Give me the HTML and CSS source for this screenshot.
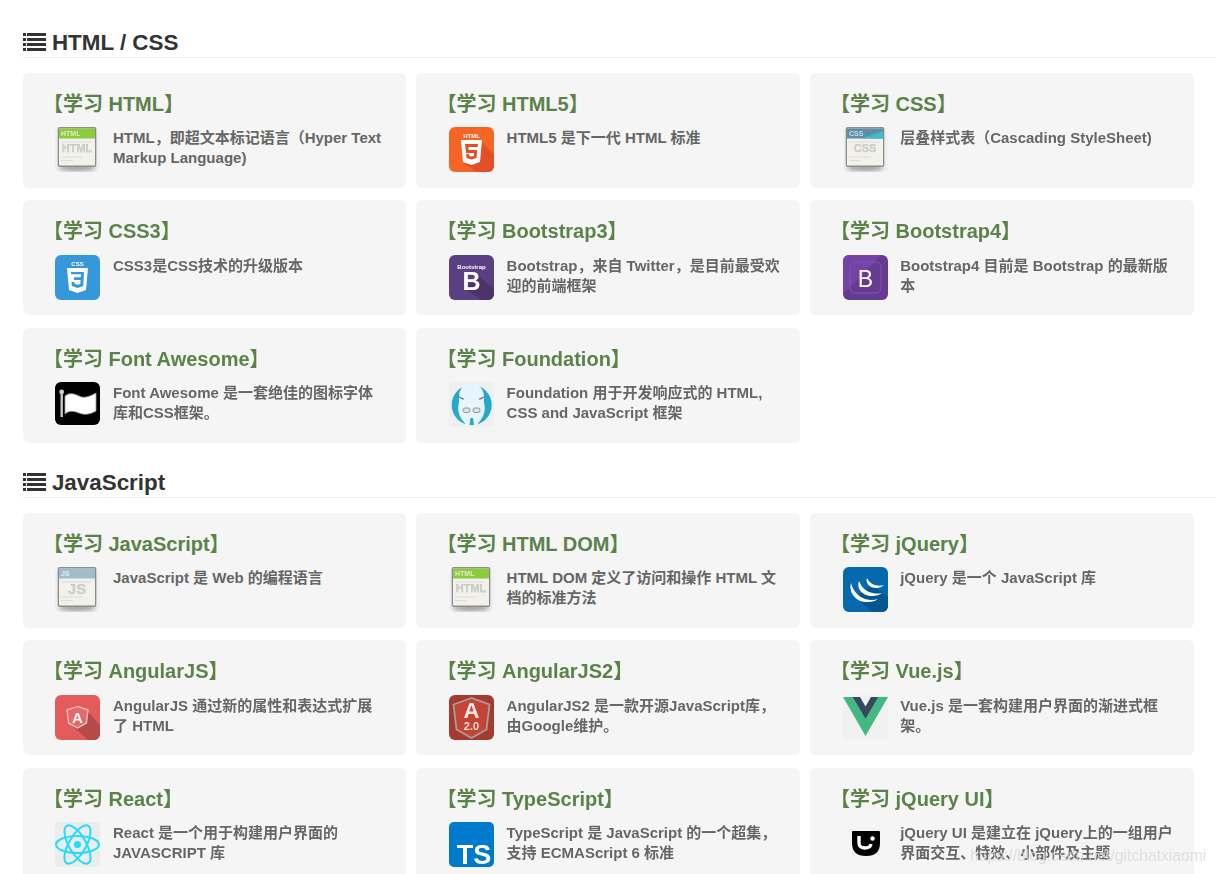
FILE: index.html
```html
<!DOCTYPE html>
<html lang="zh-CN">
<head>
<meta charset="utf-8">
<title>教程</title>
<link rel="stylesheet" href="styles.css">
</head>
<body>
<svg class="defs" width="0" height="0" aria-hidden="true">
  <defs>
    <filter id="blur3" x="-30%" y="-30%" width="160%" height="160%"><feGaussianBlur stdDeviation="2"/></filter>
    <filter id="blur1" x="-30%" y="-30%" width="160%" height="160%"><feGaussianBlur stdDeviation="0.5"/></filter>
    <filter id="soft" x="-10%" y="-10%" width="120%" height="120%"><feGaussianBlur stdDeviation="0.3"/></filter>
    <symbol id="list" viewBox="0 0 23 18">
      <path fill="#333" d="M0 0h3v3H0zM4 0h19v3H4zM0 5h3v3H0zM4 5h19v3H4zM0 10h3v3H0zM4 10h19v3H4zM0 15h3v3H0zM4 15h19v3H4z"/>
    </symbol>
    <symbol id="sheet" viewBox="0 0 45 45">
      <rect x="0.500" y="2" width="43" height="42" rx="4" fill="#e2e2e2" filter="url(#blur3)" opacity=".55"/>
      <ellipse cx="22" cy="41" rx="18" ry="2.400" fill="#777" filter="url(#blur3)" opacity=".8"/>
      <rect x="2.700" y="0" width="38.600" height="40" rx="2" fill="#8d8d88"/>
      <rect x="4" y="1.500" width="36" height="37" fill="#f2f1ec"/>
      <path d="M6 15h30M6 30h22M6 33.500h12" stroke="#dcdbd5" stroke-width="1"/>
    </symbol>
  </defs>
</svg>

<main class="page">
  <section class="group">
    <h2 class="group-title"><svg class="list-icon"><use href="#list"/></svg>HTML / CSS</h2>
    <div class="cards">
      <a class="card">
        <h4 class="card-title">【学习 HTML】</h4>
        <div class="card-body">
          <svg class="icon" viewBox="0 0 45 45"><use href="#sheet"/><g filter="url(#soft)"><rect x="4" y="1.500" width="36" height="10" fill="#8ccb3c"/><text x="6" y="9" class="t-head">HTML</text><text x="22" y="25" class="t-mid">HTML</text></g></svg>
          <p class="card-text">HTML，即超文本标记语言（Hyper Text Markup Language)</p>
        </div>
      </a>
      <a class="card">
        <h4 class="card-title">【学习 HTML5】</h4>
        <div class="card-body">
          <svg class="icon" viewBox="0 0 45 45"><rect width="45" height="45" rx="6" fill="#f56525"/><path d="M33 15L45 28V39a6 6 0 0 1-6 6H28L14 36z" fill="#e44d26"/><g filter="url(#soft)"><path d="M12 13h21l-2 22-8.500 3-8.500-3z" fill="#fff"/><path d="M16 17h13l-.4 3H19.500l.2 3h8.600l-.8 8-5 1.500-5-1.500-.3-4h2.800l.2 2 2.300.6 2.300-.6.300-3h-8z" fill="#e44d26"/><text x="22.500" y="11" class="t-tiny">HTML</text></g></svg>
          <p class="card-text">HTML5 是下一代 HTML 标准</p>
        </div>
      </a>
      <a class="card">
        <h4 class="card-title">【学习 CSS】</h4>
        <div class="card-body">
          <svg class="icon" viewBox="0 0 45 45"><use href="#sheet"/><g filter="url(#soft)"><rect x="4" y="1.500" width="36" height="10" fill="#5b8ea6"/><path d="M18 11.500L40 4v7.500z" fill="#3fb9cf"/><text x="6" y="9" class="t-head">CSS</text><text x="22" y="25" class="t-mid">CSS</text></g></svg>
          <p class="card-text">层叠样式表（Cascading StyleSheet)</p>
        </div>
      </a>
      <a class="card">
        <h4 class="card-title">【学习 CSS3】</h4>
        <div class="card-body">
          <svg class="icon" viewBox="0 0 45 45"><rect width="45" height="45" rx="6" fill="#3498db"/><g filter="url(#soft)"><path d="M12 13h21l-2 22-8.500 3-8.500-3z" fill="#fff"/><path d="M16 17h13l-.8 14-5.700 2-5.700-2-.3-4h3l.2 2 2.800.8 2.800-.8.300-4h-6.500v-2.800h6.700l.2-3h-9.800z" fill="#3498db"/><text x="22.500" y="11" class="t-tiny">CSS</text></g></svg>
          <p class="card-text">CSS3是CSS技术的升级版本</p>
        </div>
      </a>
      <a class="card">
        <h4 class="card-title">【学习 Bootstrap3】</h4>
        <div class="card-body">
          <svg class="icon" viewBox="0 0 45 45"><rect width="45" height="45" rx="6" fill="#5b3f85"/><path d="M30 21L45 34V39a6 6 0 0 1-6 6H33L16 34z" fill="#4a3468"/><g filter="url(#soft)"><text x="22.500" y="13.500" class="t-tiny">Bootstrap</text><text x="22.500" y="35" class="t-big">B</text></g></svg>
          <p class="card-text">Bootstrap，来自 Twitter，是目前最受欢迎的前端框架</p>
        </div>
      </a>
      <a class="card">
        <h4 class="card-title">【学习 Bootstrap4】</h4>
        <div class="card-body">
          <svg class="icon" viewBox="0 0 45 45"><rect width="45" height="45" rx="6" fill="#643a93"/><path d="M0 6a6 6 0 0 1 6-6H39L0 39z" fill="#7542a6"/><rect x="7" y="7" width="31" height="31" rx="5" fill="none" stroke="#7f57a6" stroke-width="1"/><text x="22.500" y="32" class="t-b4">B</text></svg>
          <p class="card-text">Bootstrap4 目前是 Bootstrap 的最新版本</p>
        </div>
      </a>
      <a class="card">
        <h4 class="card-title">【学习 Font Awesome】</h4>
        <div class="card-body">
          <svg class="icon" viewBox="0 0 45 45"><rect width="45" height="43" rx="6" fill="#000"/><g filter="url(#soft)"><circle cx="6.700" cy="10" r="2.400" fill="#ccc"/><rect x="5.500" y="10" width="2.400" height="25" fill="#c8c8c8"/><path d="M10 14c5-4 10-2 14 0s8 2 17-3v18c-7 4-12 4-17 2s-10-3-14 1z" fill="#fff" stroke="#999" stroke-width=".8"/></g></svg>
          <p class="card-text">Font Awesome 是一套绝佳的图标字体库和CSS框架。</p>
        </div>
      </a>
      <a class="card">
        <h4 class="card-title">【学习 Foundation】</h4>
        <div class="card-body">
          <svg class="icon" viewBox="0 0 45 45"><rect width="45" height="45" rx="4" fill="#efefef"/><g filter="url(#soft)"><circle cx="22.700" cy="23" r="20" fill="#26a8cc"/><path d="M16 2C19 1 25 3 29 3C33 6 35 10 35 15L35 20C37 28 35 34 31 39L27 44H18L14 39C10 34 8 28 10 20L10 15C10 9 13 5 16 2z" fill="#e6f4fb"/><path d="M7 12c2 3 4 5 8 6l-.5-1.800c-3-.7-5-2-7.500-4.200zM38 12c-2 3-4 5-8 6l.5-1.800c3-.7 5-2 7.500-4.200z" fill="#6a7a80"/><rect x="14" y="26" width="7" height="4.500" rx="2" fill="#dde4e6" stroke="#7a8588" stroke-width=".8"/><rect x="24" y="26" width="7" height="4.500" rx="2" fill="#dde4e6" stroke="#7a8588" stroke-width=".8"/><path d="M21.500 36h2.500l1 7h-4.500z" fill="#26a8cc"/></g></svg>
          <p class="card-text">Foundation 用于开发响应式的 HTML, CSS and JavaScript 框架</p>
        </div>
      </a>
    </div>
  </section>

  <section class="group">
    <h2 class="group-title"><svg class="list-icon"><use href="#list"/></svg>JavaScript</h2>
    <div class="cards">
      <a class="card">
        <h4 class="card-title">【学习 JavaScript】</h4>
        <div class="card-body">
          <svg class="icon" viewBox="0 0 45 45"><use href="#sheet"/><g filter="url(#soft)"><rect x="4" y="1.500" width="36" height="10" fill="#a3bccb"/><text x="6" y="9" class="t-head">JS</text><text x="22" y="27" class="t-mid t-js">JS</text></g></svg>
          <p class="card-text">JavaScript 是 Web 的编程语言</p>
        </div>
      </a>
      <a class="card">
        <h4 class="card-title">【学习 HTML DOM】</h4>
        <div class="card-body">
          <svg class="icon" viewBox="0 0 45 45"><use href="#sheet"/><g filter="url(#soft)"><rect x="4" y="1.500" width="36" height="10" fill="#8ccb3c"/><text x="6" y="9" class="t-head">HTML</text><text x="22" y="25" class="t-mid">HTML</text></g></svg>
          <p class="card-text">HTML DOM 定义了访问和操作 HTML 文档的标准方法</p>
        </div>
      </a>
      <a class="card">
        <h4 class="card-title">【学习 jQuery】</h4>
        <div class="card-body">
          <svg class="icon" viewBox="0 0 45 45"><rect width="45" height="45" rx="6" fill="#0769ad"/><path d="M30 18L45 30v9a6 6 0 0 1-6 6H29L12 30z" fill="#06568f"/><g fill="#fff" filter="url(#soft)"><path d="M8 16C5 26 14 36 25 35C29 35 33 34 35 32C25 35 12 31 8 16z"/><path d="M16 14C13 22 20 29 29 29C33 29 37 28 39 26C31 28 20 25 16 14z"/><path d="M24 11C22 16 27 21 33 21C36 21 39 20 41 18C35 20 27 18 24 11z"/></g></svg>
          <p class="card-text">jQuery 是一个 JavaScript 库</p>
        </div>
      </a>
      <a class="card">
        <h4 class="card-title">【学习 AngularJS】</h4>
        <div class="card-body">
          <svg class="icon" viewBox="0 0 45 45"><rect width="45" height="45" rx="6" fill="#e45b5b"/><path d="M32 16L45 30v9a6 6 0 0 1-6 6H33L15 29z" fill="#b64a4a"/><g filter="url(#soft)"><path d="M22.500 11.500l-10.500 3.500 1.600 13 8.900 5 8.900-5 1.600-13z" fill="#e66a6a" stroke="#f3c4c4" stroke-width="1.300"/><text x="22.500" y="28" class="t-a">A</text></g></svg>
          <p class="card-text">AngularJS 通过新的属性和表达式扩展了 HTML</p>
        </div>
      </a>
      <a class="card">
        <h4 class="card-title">【学习 AngularJS2】</h4>
        <div class="card-body">
          <svg class="icon" viewBox="0 0 45 45"><rect width="45" height="45" rx="6" fill="#a53a30"/><g filter="url(#soft)"><path d="M22.500 3l-18 6.500 3 25 15 8.500 15-8.500 3-25z" fill="#c44536" stroke="#a6a09d" stroke-width="1.800"/><text x="22.500" y="23" class="t-a2">A</text><text x="22.500" y="35" class="t-a2n">2.0</text></g></svg>
          <p class="card-text">AngularJS2 是一款开源JavaScript库，由Google维护。</p>
        </div>
      </a>
      <a class="card">
        <h4 class="card-title">【学习 Vue.js】</h4>
        <div class="card-body">
          <svg class="icon" viewBox="0 0 45 45"><rect width="45" height="45" rx="4" fill="#eee" opacity=".6"/><path d="M0 2h9.500l13 22 13-22H45L22.500 41z" fill="#42b883" filter="url(#blur1)"/><path d="M9.500 2h7.500l5.500 9.500L28 2h7.500l-13 22z" fill="#35495e" filter="url(#blur1)"/></svg>
          <p class="card-text">Vue.js 是一套构建用户界面的渐进式框架。</p>
        </div>
      </a>
      <a class="card">
        <h4 class="card-title">【学习 React】</h4>
        <div class="card-body">
          <svg class="icon" viewBox="0 0 45 45"><rect width="45" height="45" rx="3" fill="#ececec"/><g fill="none" stroke="#22dcff" stroke-width="2" filter="url(#soft)"><ellipse cx="22.500" cy="22.500" rx="21.500" ry="8.500"/><ellipse cx="22.500" cy="22.500" rx="21.500" ry="8.500" transform="rotate(60 22.500 22.500)"/><ellipse cx="22.500" cy="22.500" rx="21.500" ry="8.500" transform="rotate(120 22.500 22.500)"/></g><circle cx="22.500" cy="22.500" r="3.600" fill="#22dcff"/></svg>
          <p class="card-text">React 是一个用于构建用户界面的 JAVASCRIPT 库</p>
        </div>
      </a>
      <a class="card">
        <h4 class="card-title">【学习 TypeScript】</h4>
        <div class="card-body">
          <svg class="icon" viewBox="0 0 45 45"><rect width="45" height="45" rx="5" fill="#007acc"/><text x="25" y="42" class="t-ts" filter="url(#soft)">TS</text></svg>
          <p class="card-text">TypeScript 是 JavaScript 的一个超集，支持 ECMAScript 6 标准</p>
        </div>
      </a>
      <a class="card">
        <h4 class="card-title">【学习 jQuery UI】</h4>
        <div class="card-body">
          <svg class="icon" viewBox="0 0 45 45"><g filter="url(#soft)"><path d="M10 10h26v11c0 8-5 12-13 12S10 29 10 21z" fill="#000" stroke="#000" stroke-width="2" stroke-linejoin="round"/><path d="M16 14v7c0 3 2.500 5 6 5s5.500-1.500 6-4" fill="none" stroke="#fff" stroke-width="3.400"/><circle cx="29.500" cy="16.500" r="2.200" fill="#fff"/></g></svg>
          <p class="card-text">jQuery UI 是建立在 jQuery上的一组用户界面交互、特效、小部件及主题</p>
        </div>
      </a>
    </div>
  </section>
</main>
<div class="watermark">https://blog.csdn.net/gitchatxiaomi</div>
</body>
</html>
```
FILE: styles.css
```css
html, body {
  margin: 0;
  padding: 0;
  height: 874px;
  overflow: hidden;
  background: #fff;
}
body {
  position: relative;
  font-family: "Liberation Sans", "Noto Sans CJK SC", sans-serif;
}
.defs {
  position: absolute;
}
.page {
  padding: 29.9px 0 0 22.9px;
}
.group {
  margin-bottom: 27px;
}
.group-title {
  display: flex;
  align-items: flex-start;
  gap: 6px;
  margin: 0 0 15px;
  height: 27px;
  border-bottom: 1px solid #eee;
  font-size: 22.4px;
  line-height: 25px;
  font-weight: 700;
  color: #333;
}
.list-icon {
  width: 23px;
  height: 18px;
  margin-top: 3px;
}
.cards {
  display: grid;
  grid-template-columns: repeat(3, 1fr);
  gap: 12.5px 10px;
  margin-right: 22.45px;
}
.card {
  display: block;
  box-sizing: border-box;
  height: 115px;
  padding: 19px 19.35px 0 20px;
  border-radius: 6px;
  background: #f5f5f5;
}
.card-title {
  margin: 0 0 11.4px;
  font-size: 20px;
  line-height: 24px;
  font-weight: 700;
  color: #5b8249;
}
.card-body {
  display: flex;
  align-items: flex-start;
  padding-left: 12.55px;
}
.icon {
  flex: none;
  width: 45px;
  height: 45px;
  margin-right: 12.6px;
}
.card-text {
  margin: 1px 0 0;
  font-size: 15px;
  line-height: 20px;
  font-weight: 700;
  color: #666;
}
.watermark {
  position: absolute;
  left: 970px;
  top: 847px;
  font-size: 15.7px;
  line-height: 18px;
  color: rgba(215, 215, 215, 0.75);
  white-space: nowrap;
}
.t-head { font: 700 7px "Liberation Sans", sans-serif; fill: #fff; opacity: .7; }
.t-mid { font: 700 11px "Liberation Sans", sans-serif; fill: #d2d2ce; stroke: #b5b5b5; stroke-width: .25; text-anchor: middle; }
.t-js { font-size: 15px; }
.t-tiny { font: 700 6px "Liberation Sans", sans-serif; fill: #fff; text-anchor: middle; }
.t-big { font: 700 25px "Liberation Sans", sans-serif; fill: #fff; text-anchor: middle; }
.t-b4 { font: 400 23px "Liberation Sans", sans-serif; fill: #fff; text-anchor: middle; }
.t-a { font: 700 15px "Liberation Sans", sans-serif; fill: #fff; text-anchor: middle; }
.t-a2 { font: 700 22px "Liberation Sans", sans-serif; fill: #f4e6e4; text-anchor: middle; }
.t-a2n { font: 700 11px "Liberation Sans", sans-serif; fill: #e8d8d5; text-anchor: middle; }
.t-ts { font: 700 27px "Liberation Sans", sans-serif; fill: #fff; text-anchor: middle; }
```
